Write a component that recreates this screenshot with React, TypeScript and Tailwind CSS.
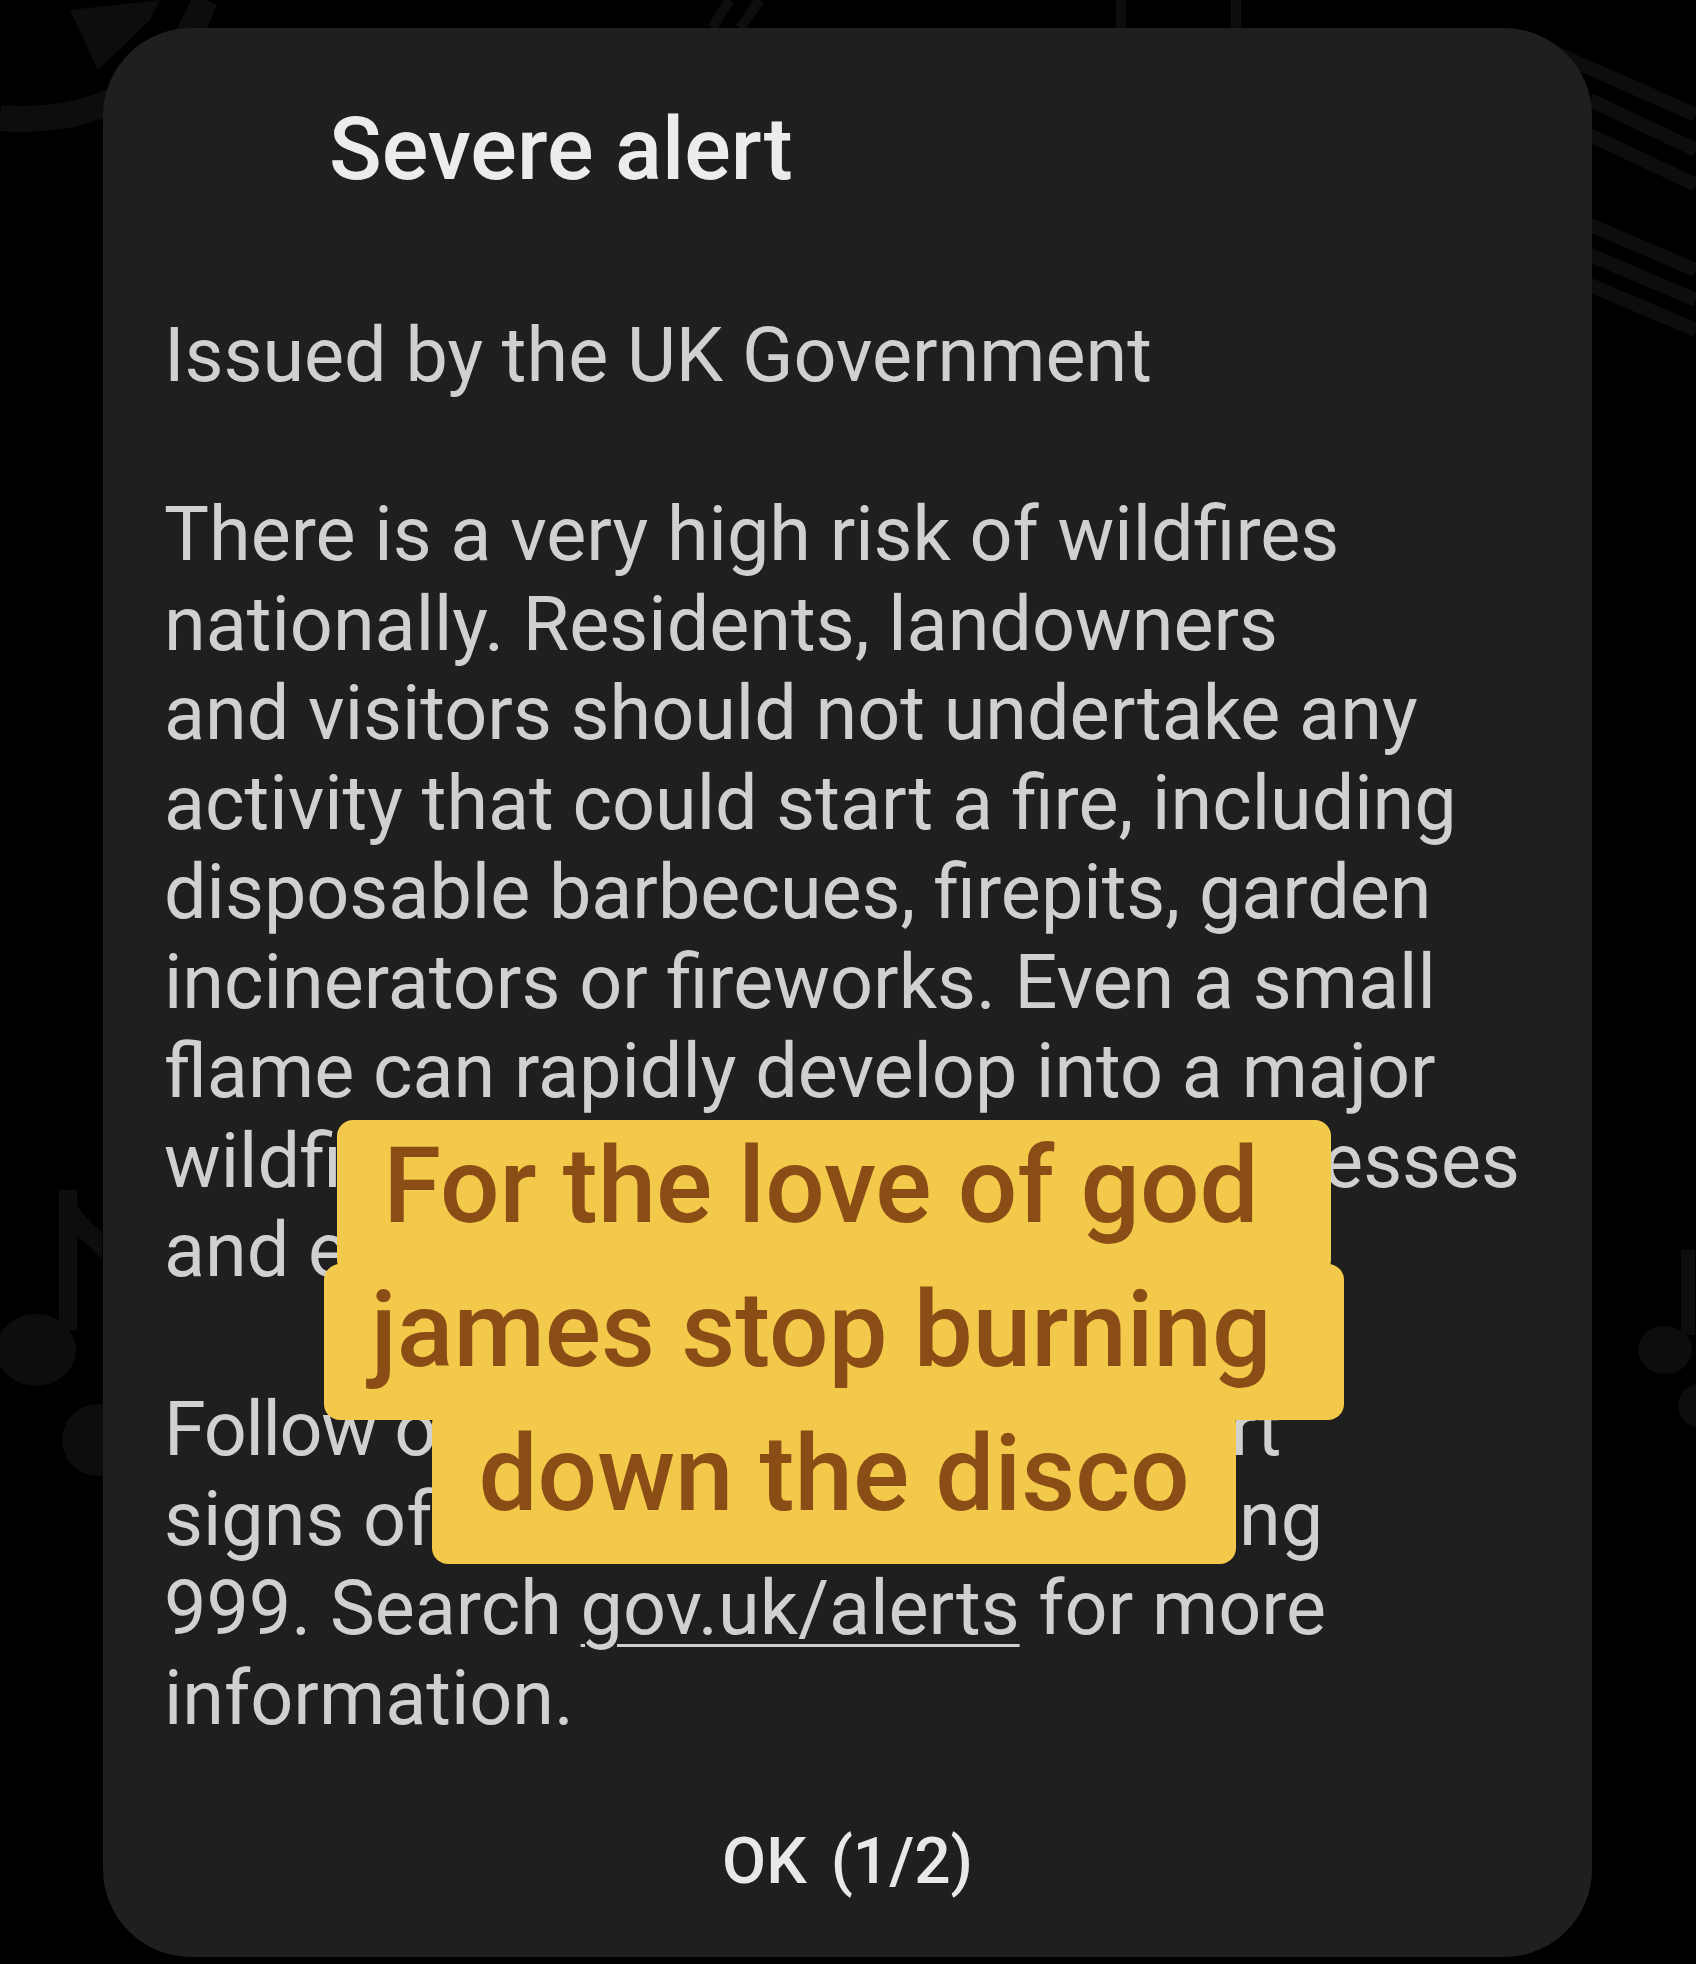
const body = "font-['Roboto',_'Liberation_Sans',_sans-serif]"

const firstPara = [
  'There is a very high risk of wildfires',
  'nationally. Residents, landowners',
  'and visitors should not undertake any',
  'activity that could start a fire, including',
  'disposable barbecues, firepits, garden',
  'incinerators or fireworks. Even a small',
  'flame can rapidly develop into a major',
  'wildfire, endangering homes, businesses',
  'and environments.',
]

const caption = ['For the love of god ', 'james stop burning ', 'down the disco']

function Backdrop() {
  return (
    <svg className="absolute inset-0" width="1696" height="1964" viewBox="0 0 1696 1964" fill="none">
      <g fill="#0d0d0d" stroke="#0d0d0d">
        {/* top-left ring and note head */}
        <path d="M0 118 C 90 125 170 90 205 0" strokeWidth="26" fill="none" />
        <path d="M70 10 L160 0 L150 20 L98 70 Z" stroke="none" />
        {/* top strokes */}
        <path d="M712 28 L730 0 M740 28 L760 0" strokeWidth="10" fill="none" />
        <path d="M1121 0 V28 M1236 0 V28" strokeWidth="10" fill="none" />
        {/* staff lines top right */}
        <path d="M1560 55 L1696 115 M1590 100 L1696 150 M1590 135 L1696 185 M1590 225 L1696 270 M1590 255 L1696 300 M1590 285 L1696 330" strokeWidth="14" fill="none" />
        {/* left eighth note */}
        <path d="M68 1190 V1330" strokeWidth="18" fill="none" />
        <path d="M68 1190 Q 80 1215 102 1232 L102 1260 Q 85 1240 68 1230 Z" stroke="none" />
        <ellipse cx="36" cy="1350" rx="40" ry="36" stroke="none" />
        <circle cx="98" cy="1440" r="36" stroke="none" />
        {/* right note */}
        <path d="M1688 1250 V1335" strokeWidth="14" fill="none" />
        <ellipse cx="1665" cy="1350" rx="27" ry="24" stroke="none" />
        <circle cx="1700" cy="1406" r="22" stroke="none" />
      </g>
    </svg>
  )
}

export default function App() {
  return (
    <div className={`relative w-[1696px] h-[1964px] bg-black overflow-hidden ${body}`}>
      <Backdrop />

      {/* Alert card */}
      <div className="relative ml-[103px] pt-[28px]">
        <div className="flex flex-col w-[1489px] h-[1929px] rounded-[88px] bg-[#1f1f1f]">
          <h1 className="pl-[226px] pt-[78px] text-[87px] leading-[87px] font-medium text-[#ececec]">
            Severe alert
          </h1>

          <div className="mt-[118px] pl-[61px] text-[75.5px] leading-[89.5px] text-[#d0d0d0] whitespace-nowrap">
            <div>Issued by the UK Government</div>
            <div className="h-[89.5px]" />
            {firstPara.map((line) => (
              <div key={line}>{line}</div>
            ))}
            <div className="h-[89.5px]" />
            <div className="tracking-[-1.3px]">Follow official guidance and report</div>
            <div>signs of fire immediately by calling</div>
            <div>
              999. Search{' '}
              <span className="underline decoration-[3px] underline-offset-[10px]">gov.uk/alerts</span> for more
            </div>
            <div>information.</div>
          </div>

          <div className="mt-auto pb-[62px] flex justify-center gap-[24px] text-[64px] leading-[66px] font-medium text-[#e8e8e8]">
            <span>OK</span>
            <span>(1/2)</span>
          </div>
        </div>
      </div>

      {/* Caption overlay */}
      <div className="absolute left-0 top-[1120px] w-[1668px] flex flex-col items-center">
        {caption.map((line, i) => (
          <div
            key={line}
            className={`h-[156px] px-[46px] rounded-[16px] bg-[#f2c94a] text-[#8a4d16] font-medium text-[105px] leading-[134px] whitespace-pre ${i > 0 ? '-mt-[12px]' : ''}`}
          >
            {line}
          </div>
        ))}
      </div>
    </div>
  )
}
